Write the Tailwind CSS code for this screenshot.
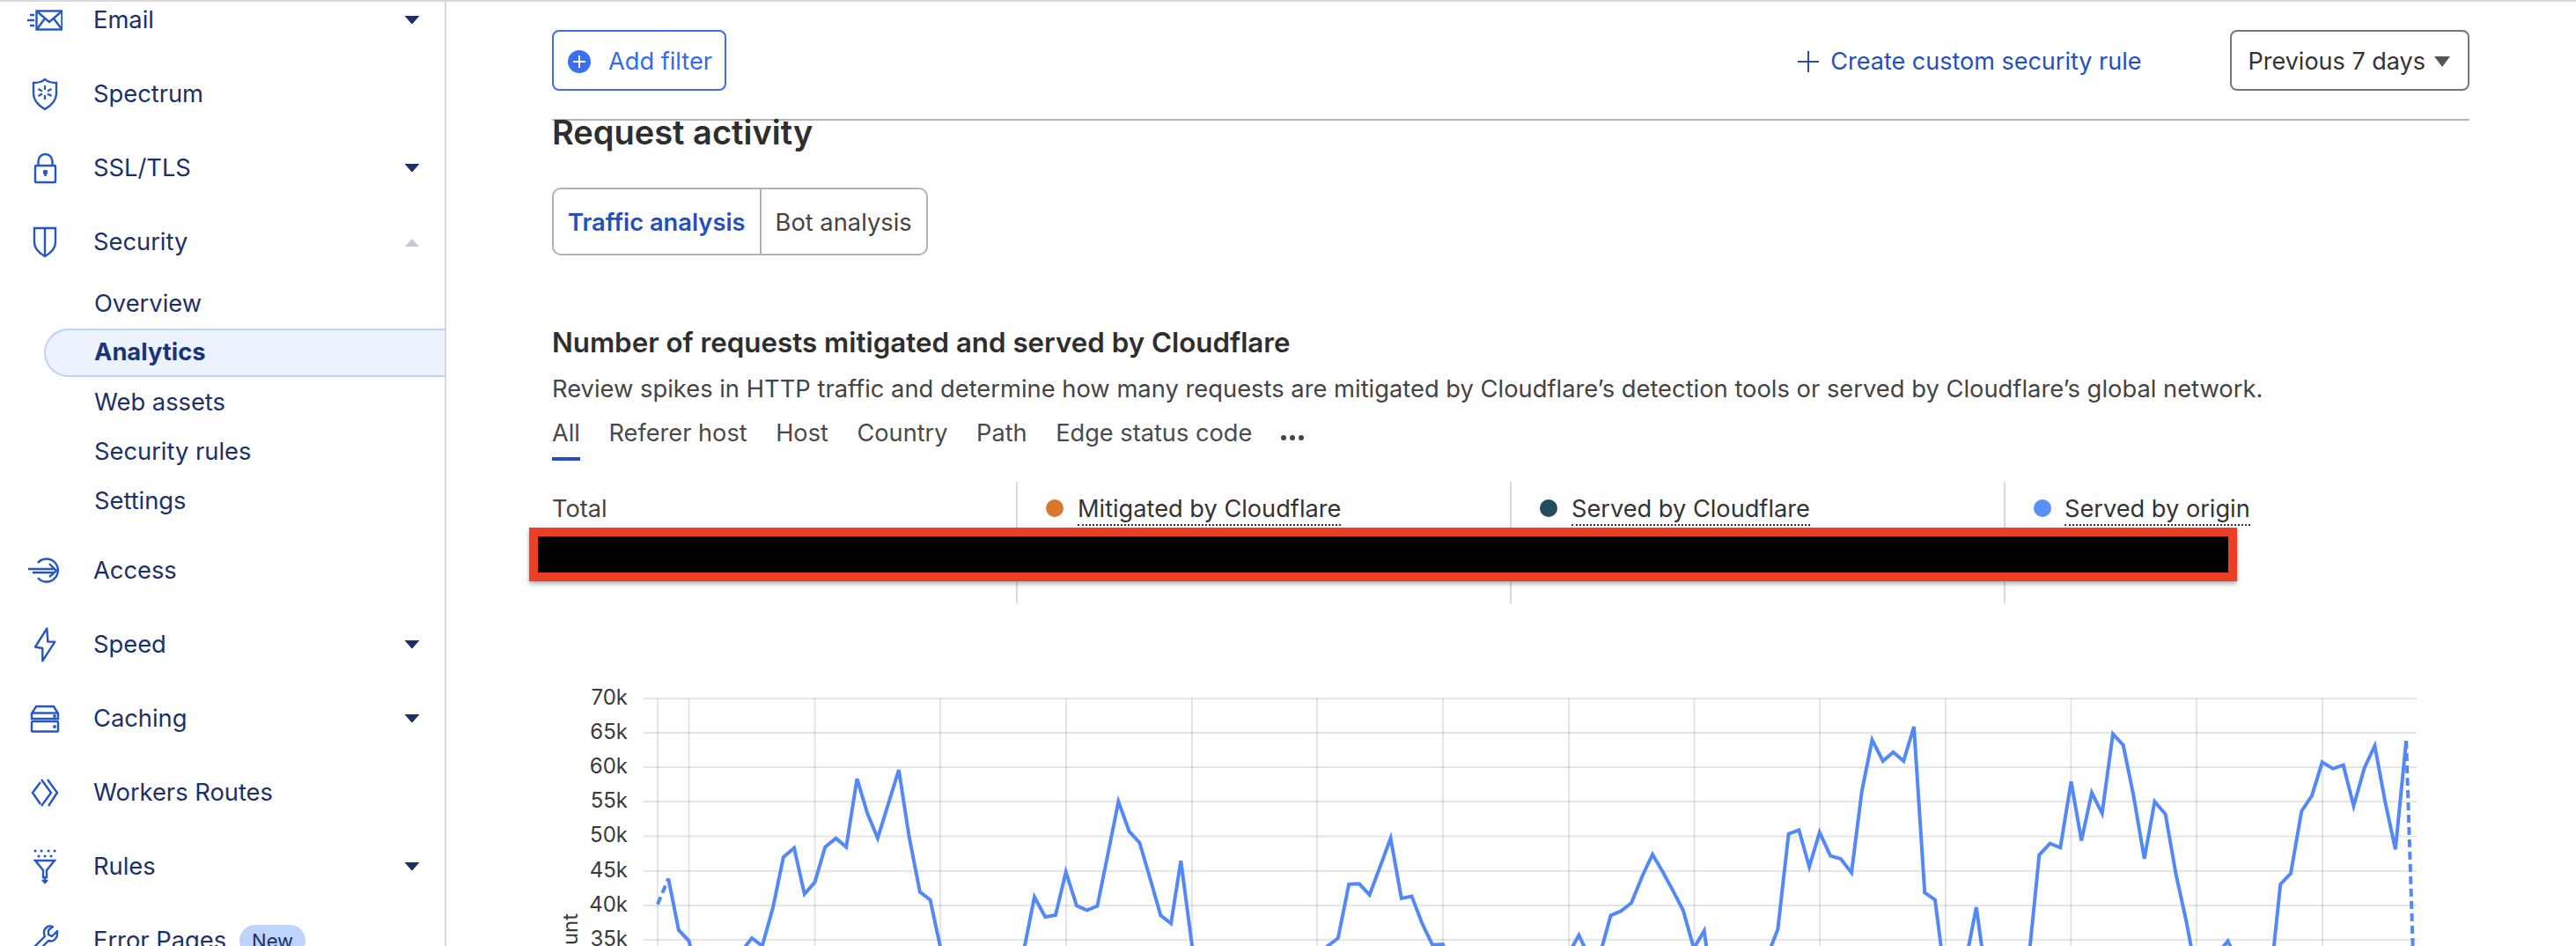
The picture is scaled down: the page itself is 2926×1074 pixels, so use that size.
<!DOCTYPE html>
<html lang="en">
<head>
  <meta charset="UTF-8" />
  <title>Security Analytics</title>
  <script src="https://cdn.jsdelivr.net/npm/@tailwindcss/browser@4"></script>
</head>
<body class="h-[1074px] overflow-hidden bg-white border-t-2 border-[#d9d9d9] font-['Inter',sans-serif]">
  <div class="flex h-full">

    <!-- sidebar -->
    <nav class="w-[507px] shrink-0 border-r-2 border-[#d9d9d9] text-[#1b3068] text-[27.300px] -mt-[21px]">
      <a class="flex items-center h-[84px] pl-[31px] pr-[29px]">
        <svg class="w-10 h-10 shrink-0" viewBox="0 0 40 40" fill="none" stroke="#2456c4" stroke-width="2.4"><rect x="10.500" y="9.500" width="29" height="21"/><path d="M11 10l14 12 14-12M11 30l9-12M39 30l-9-12M3 14h5M0 20h8M3 26h5"/></svg>
        <span class="ml-[35px] flex-1">Email</span>
        <svg class="w-4 h-[10px]" viewBox="0 0 16 10"><path d="M0 0h16L8 9z" fill="#1a2f6b" stroke="#1a2f6b" stroke-linejoin="round"/></svg>
      </a>
      <a class="flex items-center h-[84px] pl-[31px] pr-[29px]">
        <svg class="w-10 h-10 shrink-0" viewBox="0 0 40 40" fill="none" stroke="#2456c4" stroke-width="2.4"><path d="M20 3c3 3 8 4 13 4v12c0 9-6 14-13 18-7-4-13-9-13-18V7c5 0 10-1 13-4z"/><path d="M20 10v5M20 21v5M12.500 14l4.500 2.500M23 19.500l4.500 2.500M27.500 14L23 16.500M17 19.500L12.500 22" stroke-width="2.200"/></svg>
        <span class="ml-[35px] flex-1">Spectrum</span>
      </a>
      <a class="flex items-center h-[84px] pl-[31px] pr-[29px]">
        <svg class="w-10 h-10 shrink-0" viewBox="0 0 40 40" fill="none" stroke="#2456c4" stroke-width="2.4"><rect x="9" y="17" width="23" height="19" rx="1"/><path d="M12.500 17v-5a8 8 0 0 1 16 0v5"/><path d="M20.500 24v5"/><circle cx="20.500" cy="24.500" r="1.500" fill="#2456c4"/></svg>
        <span class="ml-[35px] flex-1">SSL/TLS</span>
        <svg class="w-4 h-[10px]" viewBox="0 0 16 10"><path d="M0 0h16L8 9z" fill="#1a2f6b" stroke="#1a2f6b" stroke-linejoin="round"/></svg>
      </a>
      <a class="flex items-center h-[84px] pl-[31px] pr-[29px]">
        <svg class="w-10 h-10 shrink-0" viewBox="0 0 40 40" fill="none" stroke="#2456c4" stroke-width="2.4"><path d="M8 4h24v16c0 7-5 12-12 16-7-4-12-9-12-16zM20 4v32"/></svg>
        <span class="ml-[35px] flex-1">Security</span>
        <svg class="w-4 h-[10px]" viewBox="0 0 16 10"><path d="M8 1l8 9H0z" fill="#c3cbd9"/></svg>
      </a>

      <a class="flex items-center h-14 pl-[107px]">Overview</a>
      <a class="flex items-center h-[55px] mb-px ml-[50px] pl-[55px] rounded-l-full bg-[#edf3fe] border-2 border-r-0 border-[#bdd3fb] font-bold text-[#1a3478]">Analytics</a>
      <a class="flex items-center h-14 pl-[107px]">Web assets</a>
      <a class="flex items-center h-14 pl-[107px]">Security rules</a>
      <a class="flex items-center h-14 pl-[107px] mb-[9px]">Settings</a>

      <a class="flex items-center h-[84px] pl-[31px] pr-[29px]">
        <svg class="w-10 h-10 shrink-0" viewBox="0 0 40 40" fill="none" stroke="#2456c4" stroke-width="2.4"><path d="M12 11a13 13 0 1 1 0 17"/><path d="M1 18h30M6 22h25M25 12l8 8-8 7"/></svg>
        <span class="ml-[35px] flex-1">Access</span>
      </a>
      <a class="flex items-center h-[84px] pl-[31px] pr-[29px]">
        <svg class="w-10 h-10 shrink-0" viewBox="0 0 40 40" fill="none" stroke="#2456c4" stroke-width="2.4" stroke-linejoin="round"><path d="M22.300 1.500L9 22.500l8.300 1.500v14.400L31.300 16.600h-8z"/></svg>
        <span class="ml-[35px] flex-1">Speed</span>
        <svg class="w-4 h-[10px]" viewBox="0 0 16 10"><path d="M0 0h16L8 9z" fill="#1a2f6b" stroke="#1a2f6b" stroke-linejoin="round"/></svg>
      </a>
      <a class="flex items-center h-[84px] pl-[31px] pr-[29px]">
        <svg class="w-10 h-10 shrink-0" viewBox="0 0 40 40" fill="none" stroke="#2456c4" stroke-width="2.4"><path d="M5 20v-6l5-8h20l5 8v6z"/><path d="M5 13.500h30"/><rect x="5" y="23" width="30" height="11.500" rx="1"/><circle cx="31" cy="17" r=".8"/><circle cx="31" cy="29" r=".8"/></svg>
        <span class="ml-[35px] flex-1">Caching</span>
        <svg class="w-4 h-[10px]" viewBox="0 0 16 10"><path d="M0 0h16L8 9z" fill="#1a2f6b" stroke="#1a2f6b" stroke-linejoin="round"/></svg>
      </a>
      <a class="flex items-center h-[84px] pl-[31px] pr-[29px]">
        <svg class="w-10 h-10 shrink-0" viewBox="0 0 40 40" fill="none" stroke="#2456c4" stroke-width="2.4"><path d="M15 8L6 20l9 13M16 5l11 15-11 15M23 5l11 15-10 15"/></svg>
        <span class="ml-[35px] flex-1">Workers Routes</span>
      </a>
      <a class="flex items-center h-[84px] pl-[31px] pr-[29px]">
        <svg class="w-10 h-10 shrink-0" viewBox="0 0 40 40" fill="none" stroke="#2456c4" stroke-width="2.4"><path d="M9 13h22l-9 11v8h-4v-8zM20 31v7M17 35l3 3 3-3"/><path d="M9 2h.1M16 2h.1M24 2h.1M31 2h.1M13 8h.1M20 8h.1M27 8h.1" stroke-linecap="round" stroke-width="3"/></svg>
        <span class="ml-[35px] flex-1">Rules</span>
        <svg class="w-4 h-[10px]" viewBox="0 0 16 10"><path d="M0 0h16L8 9z" fill="#1a2f6b" stroke="#1a2f6b" stroke-linejoin="round"/></svg>
      </a>
      <a class="flex items-center h-[84px] pl-[31px] pr-[29px]">
        <svg class="w-10 h-10 shrink-0" viewBox="0 0 40 40" fill="none" stroke="#2456c4" stroke-width="2.4" stroke-linejoin="round"><path d="M34 9l-6 6-4-2v-5l5-4c-5-2-10 1-10 7 0 2 0 3 1 4L5 30c-2 3 2 7 5 4l14-14c6 2 11-3 10-11z"/></svg>
        <span class="ml-[35px]">Error Pages</span>
        <span class="ml-[15px] flex items-center h-9 px-[14px] rounded-full bg-[#bfd4fb] text-[22px]">New</span>
      </a>
    </nav>

    <!-- main -->
    <main class="flex-1 pl-[120px]">
      <div class="w-[2178px]">
        <div class="flex items-center pt-8 pb-8 border-b-2 border-[#b5b5b5]">
          <button class="flex items-center h-[69px] pl-4 pr-[14px] pt-[3px] gap-5 rounded-lg border-2 border-[#3a6ff0] text-[#2f6cf0] text-[27.200px]">
            <svg class="w-[26px] h-[26px]" viewBox="0 0 26 26"><circle cx="13" cy="13" r="13" fill="#3a6ff0"/><path d="M13 6v14M6 13h14" stroke="#fff" stroke-width="2"/></svg>
            Add filter
          </button>
          <a class="ml-auto flex items-center gap-[13px] pt-[3px] text-[27px] text-[#2250c0]">
            <svg class="w-6 h-6" viewBox="0 0 24 24"><path d="M12 0v24M0 12h24" stroke="#2250c0" stroke-width="2"/></svg>
            Create custom security rule
          </a>
          <button class="ml-[100px] flex items-center h-[69px] pl-[19px] pr-[20px] pt-[3px] gap-[10px] rounded-lg border-2 border-[#777] text-[#333] text-[27px]">
            Previous 7 days
            <svg class="w-[18px] h-3" viewBox="0 0 18 12"><path d="M0 0h18L9 12z" fill="#555"/></svg>
          </button>
        </div>

        <h2 class="-mt-[7px] text-[38px] leading-[40px] font-semibold text-[#2e2e2e]">Request activity</h2>

        <div class="mt-[43px] inline-flex h-[77px] rounded-[10px] border-2 border-[#b3b3b3] text-[27.300px]">
          <span class="flex items-center px-4 pt-1 border-r-2 border-[#b3b3b3] font-semibold text-[#2250c0]">Traffic analysis</span>
          <span class="flex items-center px-4 pt-1 text-[#444]">Bot analysis</span>
        </div>

        <h3 class="mt-[79px] text-[31.300px] leading-[40px] font-semibold text-[#2e2e2e]">Number of requests mitigated and served by Cloudflare</h3>
        <p class="mt-[13px] text-[27.330px] leading-[40px] text-[#444]">Review spikes in HTTP traffic and determine how many requests are mitigated by Cloudflare’s detection tools or served by Cloudflare’s global network.</p>

        <div class="mt-[10px] flex gap-[32.500px] text-[27.200px] leading-[40px] text-[#4a4a4a]">
          <span class="pb-[7px] border-b-4 border-[#2250c0]">All</span>
          <span>Referer host</span>
          <span>Host</span>
          <span>Country</span>
          <span>Path</span>
          <span>Edge status code</span>
          <span class="flex gap-[4px] h-[40px] items-center pt-[10px]">
            <i class="w-[6px] h-[6px] rounded-full bg-[#444]"></i><i class="w-[6px] h-[6px] rounded-full bg-[#444]"></i><i class="w-[6px] h-[6px] rounded-full bg-[#444]"></i>
          </span>
        </div>

        <!-- totals -->
        <div class="relative mt-6 grid grid-cols-[527px_561px_561px_1fr] h-[138px] text-[27.200px] leading-[34px] text-[#444]">
          <div class="pt-[14px]">Total</div>
          <div class="flex items-start gap-4 pt-[14px] pl-[32px] border-l-2 border-[#d9d9d9]">
            <i class="mt-[6px] w-5 h-5 rounded-full bg-[#d9772f]"></i>
            <span class="border-b-2 border-dotted border-[#333] text-[#333]">Mitigated by Cloudflare</span>
          </div>
          <div class="flex items-start gap-4 pt-[14px] pl-[32px] border-l-2 border-[#d9d9d9]">
            <i class="mt-[6px] w-5 h-5 rounded-full bg-[#234c5e]"></i>
            <span class="border-b-2 border-dotted border-[#333] text-[#333]">Served by Cloudflare</span>
          </div>
          <div class="flex items-start gap-[15px] pt-[14px] pl-[32px] border-l-2 border-[#d9d9d9]">
            <i class="mt-[6px] w-5 h-5 rounded-full bg-[#5b8ff9]"></i>
            <span class="border-b-2 border-dotted border-[#333] text-[#333]">Served by origin</span>
          </div>
          <div class="absolute -left-[26px] top-[52px] w-[1940px] h-[61px] bg-black border-10 border-[#eb4026] shadow-[0_3px_5px_rgba(0,0,0,0.3)]"></div>
        </div>

        <!-- chart -->
        <svg class="block mt-[95px] w-[2178px] h-[294px]" viewBox="627 780 2178 294" font-family="Inter, sans-serif" font-size="24" fill="#3a3a3a">
          <g stroke="#000" stroke-opacity=".1" stroke-width="2">
            <path d="M731 793H2745M731 832H2745M731 871H2745M731 910H2745M731 949.500H2745M731 989H2745M731 1028H2745M731 1067H2745"/>
            <path d="M747 793V1074M782.600 793V1074M925.500 793V1074M1068 793V1074M1211 793V1074M1354 793V1074M1496 793V1074M1639 793V1074M1782 793V1074M1924.500 793V1074M2067 793V1074M2210 793V1074M2352.500 793V1074M2495 793V1074M2638 793V1074"/>
          </g>
          <g text-anchor="end">
            <text x="713" y="800">70k</text>
            <text x="713" y="839">65k</text>
            <text x="713" y="878">60k</text>
            <text x="713" y="917">55k</text>
            <text x="713" y="956">50k</text>
            <text x="713" y="996">45k</text>
            <text x="713" y="1035">40k</text>
            <text x="713" y="1074">35k</text>
            <text transform="translate(656 1035) rotate(-90)" text-anchor="start" dx="-70">Count</text>
          </g>
          <g fill="none" stroke="#5288f8" stroke-width="4">
            <g transform="translate(600 760) scale(.5102 .3333)">
              <path vector-effect="non-scaling-stroke" d="M288 800L312 712" stroke-dasharray="9 5"/>
              <polyline vector-effect="non-scaling-stroke" points="312,712 335,888 358,925 368,1000"/>
              <polyline vector-effect="non-scaling-stroke" points="470,1000 480,950 498,915 521,942 545,810 568,640 592,608 615,765 638,725 661,605 685,575 708,605 732,372 755,490 778,575 825,342 848,570 872,758 895,785 925,1000"/>
              <polyline vector-effect="non-scaling-stroke" points="1098,1000 1105,945 1127,775 1151,843 1174,837 1197,690 1221,805 1244,820 1267,806 1291,625 1314,450 1338,552 1361,590 1385,715 1408,838 1431,865 1453,652 1483,1000"/>
            </g>
            <g transform="translate(1400 760) scale(.5102 .3333)">
              <polyline vector-effect="non-scaling-stroke" points="170,1000 212,942 235,915 259,732 282,730 305,768 329,670 352,575 376,780 399,773 422,865 445,938 468,936 480,1000"/>
              <polyline vector-effect="non-scaling-stroke" points="740,1000 755,950 771,905 800,1000"/>
              <polyline vector-effect="non-scaling-stroke" points="812,1000 820,960 842,838 865,823 888,795 912,705 935,630 958,690 981,755 1003,820 1027,950 1050,890 1060,1000"/>
              <polyline vector-effect="non-scaling-stroke" points="1180,1000 1195,960 1214,885 1238,560 1261,547 1284,672 1307,555 1331,635 1354,645 1378,692 1401,415 1424,240 1448,312 1471,282 1494,312 1517,195 1541,760 1564,785 1582,1000"/>
            </g>
            <g transform="translate(2126 760) scale(.5102 .3333)">
              <polyline vector-effect="non-scaling-stroke" points="205,1000 215,950 233,810 250,1000"/>
              <polyline vector-effect="non-scaling-stroke" points="348,1000 352,950 362,800 373,632 397,593 420,607 444,382 467,583 490,420 513,490 537,220 560,258 583,430 607,645 630,450 654,493 677,695 700,855 718,1000"/>
              <polyline vector-effect="non-scaling-stroke" points="770,1000 780,950 793,925 815,1000"/>
              <polyline vector-effect="non-scaling-stroke" points="890,1000 895,950 910,732 933,695 957,483 980,430 1003,316 1027,338 1050,326 1073,465 1097,335 1120,260 1143,450 1166,613 1190,243"/>
              <path vector-effect="non-scaling-stroke" d="M1190 243L1206 1000" stroke-dasharray="9 5"/>
            </g>
          </g>
        </svg>
      </div>
    </main>
  </div>
</body>
</html>
